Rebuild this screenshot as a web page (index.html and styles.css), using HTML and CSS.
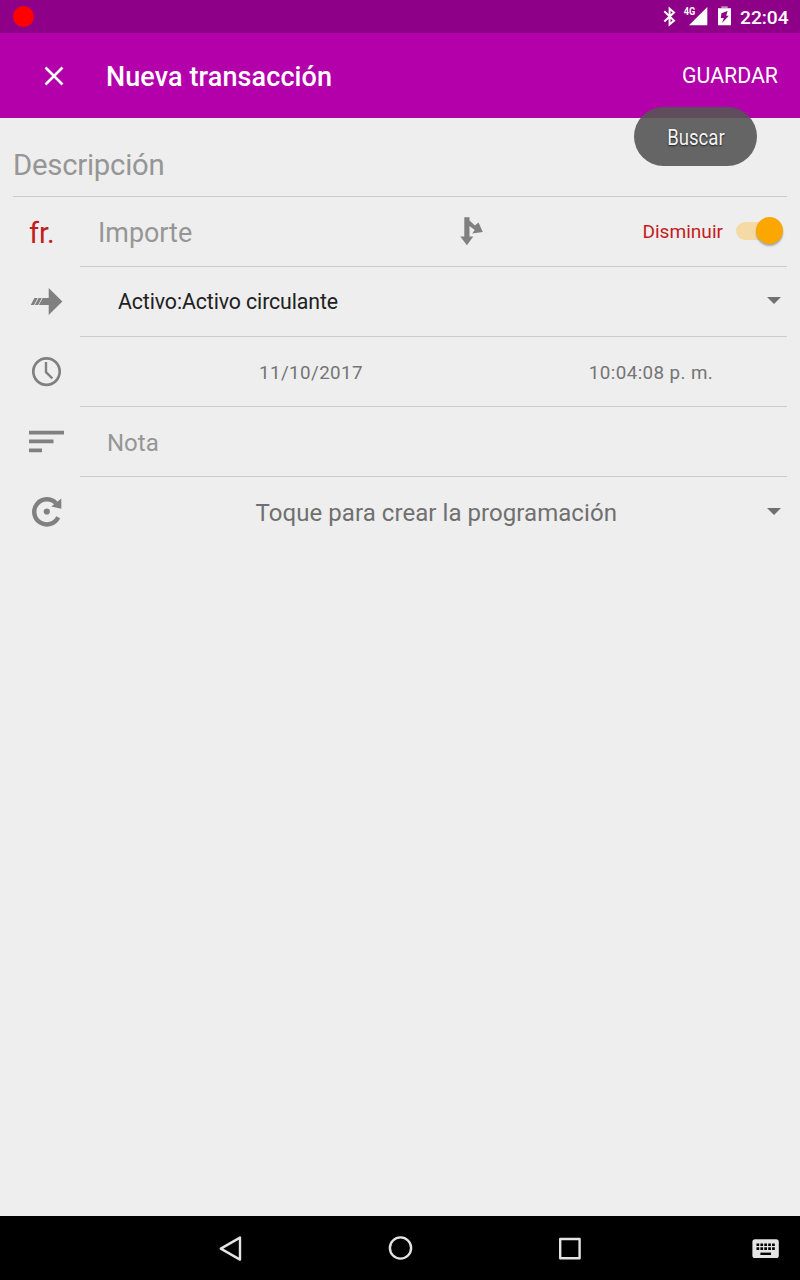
FILE: index.html
```html
<!DOCTYPE html>
<html lang="es">
<head>
<meta charset="utf-8">
<title>Nueva transacción</title>
<link rel="stylesheet" href="styles.css">
</head>
<body>
<div class="screen">
  <header class="status">
    <span class="record"></span>
    <svg class="status-icons" viewBox="660 0 76 33" width="76" height="33">
      <path d="M664.3 11.2L674 20.6L669.6 24.4V8.6L674 12.5L664.3 21.6" fill="none" stroke="#fff" stroke-width="2"/>
      <text x="683.8" y="15.2" class="net" textLength="11.5" lengthAdjust="spacingAndGlyphs">4G</text>
      <path d="M707.3 7V25.3H689z" fill="#fff"/>
      <path d="M721.3 6.3h6.4v2h-6.4z" fill="#c78ac5"/>
      <path d="M718 8.3h13v16.9h-13zM727.6 11l-6.2 2.2-0.6 4.8h3l-1.8 5 6.8-7.2h-2.6z" fill="#fff" fill-rule="evenodd"/>
    </svg>
    <span class="clock">22:04</span>
  </header>
  <div class="appbar">
    <svg class="close" viewBox="0 0 20 20" width="20" height="20"><path d="M1.5 1.5l17 17M18.5 1.5l-17 17" stroke="#fff" stroke-width="2.5"/></svg>
    <h1 class="title">Nueva transacción</h1>
    <span class="save">GUARDAR</span>
    <div class="toast"><span class="toast-text">Buscar</span></div>
  </div>
  <main class="form">
    <div class="description hint">Descripción</div>
    <div class="row">
      <div class="lead currency">fr.</div>
      <div class="field amount">
        <span class="hint importe">Importe</span>
        <svg class="split" viewBox="458 215 28 33" width="28" height="33"><path d="M464.3 217.2h5.2v3.2l5.4 5.2 3.6-3.1 4.3 9.6-10.6 1.4 2.5-3.6-5.2-4v10.6h3.8l-6.4 8.8-6.6-8.8h4z" fill="#808080"/></svg>
        <span class="decrease">Disminuir</span>
        <span class="switch"><span class="thumb"></span></span>
      </div>
    </div>
    <div class="row">
      <svg class="lead" viewBox="13 267 67 70" width="67" height="70"><path d="M34.4 298h3.3l-3.7 6.9h-3.3zM38.6 298h3.2l-3.7 6.9h-3.2zM42.7 298h6V288l13.7 13.4L48.7 315v-10.1h-9.8z" fill="#808080"/></svg>
      <div class="field"><span class="account">Activo:Activo circulante</span><span class="caret"></span></div>
    </div>
    <div class="row">
      <svg class="lead" viewBox="13 337 67 70" width="67" height="70"><circle cx="46.5" cy="371.6" r="13.2" fill="none" stroke="#808080" stroke-width="2.7"/><path d="M46 362v10.2l6.4 6.3" fill="none" stroke="#808080" stroke-width="2.4"/></svg>
      <div class="field when"><span class="date">11/10/2017</span><span class="time">10:04:08 p. m.</span></div>
    </div>
    <div class="row">
      <svg class="lead" viewBox="13 407 67 70" width="67" height="70"><path d="M29 430.7h35v3.7H29zM29 439.6h24.5v3.7H29zM29 448.6h13v3.7H29z" fill="#808080"/></svg>
      <div class="field"><span class="hint note">Nota</span></div>
    </div>
    <div class="row last">
      <svg class="lead" viewBox="13 477 67 70" width="67" height="70"><path d="M56 503.2A12.6 12.6 0 1 0 58.2 517.3" fill="none" stroke="#808080" stroke-width="4.4"/><path d="M61.3 498.5v10.2l-10-2.3z" fill="#808080"/><circle cx="46.8" cy="511.5" r="3.1" fill="#808080"/></svg>
      <div class="field"><span class="schedule">Toque para crear la programación</span><span class="caret"></span></div>
    </div>
  </main>
  <nav class="navbar">
    <svg viewBox="0 1216 800 64" width="800" height="64">
      <g fill="none" stroke="#e4e4e4" stroke-width="2.4" stroke-linejoin="round">
        <path d="M240 1237.6v22L220.8 1248.6z"/>
        <circle cx="400.5" cy="1248" r="10.6"/>
        <rect x="560.2" y="1239" width="19.4" height="19.2"/>
      </g>
      <rect x="752.4" y="1239.2" width="26.4" height="18.8" rx="2.6" fill="#e4e4e4"/>
      <path d="M756.5 1244.7h18.4M756.5 1248.6h18.4" stroke="#000" stroke-width="2.6" stroke-dasharray="2.7 1.2"/>
      <path d="M760.4 1253.8h10.6" stroke="#000" stroke-width="2.4"/>
    </svg>
  </nav>
</div>
</body>
</html>
```
FILE: styles.css
```css
* { box-sizing: border-box; }
body { margin: 0; font-family: Roboto, "Noto Sans", sans-serif; background: #eee; }
.screen { display: flex; flex-direction: column; width: 800px; height: 1280px; }
.status { display: flex; align-items: center; height: 33px; padding-left: 13px; background: #8e0087; color: #fff; }
.record { width: 21px; height: 21px; border-radius: 50%; background: #f00; }
.status-icons { margin-left: 626px; }
.net { font: 700 10.5px Roboto, sans-serif; fill: #fff; }
.clock { margin-left: 4px; font-size: 19.2px; font-weight: 500; line-height: 33px; padding-top: 1px; }
.appbar { position: relative; display: flex; align-items: center; height: 85px; padding: 0 22px 0 44px; background: #b400ab; color: #fff; }
.title { margin: 3px 0 0 42px; font-size: 27px; font-weight: 500; letter-spacing: .1px; line-height: 32px; }
.save { margin-left: auto; font-size: 21.3px; }
.toast { position: absolute; left: 634px; top: 74px; width: 123px; height: 59px; display: flex; align-items: center; justify-content: center; border-radius: 30px; background: rgba(85, 85, 85, .9); color: #f3f3f3; }
.toast-text { font-size: 21.3px; text-shadow: 0 1px 2px rgba(0, 0, 0, .75); transform: scaleX(.87); margin-top: 2px; }
.form { flex: 1; padding: 0 13px; }
.hint { color: #969696; }
.description { height: 79px; padding-top: 29px; font-size: 29.3px; letter-spacing: -.24px; line-height: 36px; border-bottom: 1px solid #ccc; }
.row { display: flex; height: 70px; }
.lead { flex: 0 0 67px; }
.currency { padding: 2px 0 0 16px; font-size: 29px; letter-spacing: -.1px; line-height: 69px; color: #c41c1c; }
.field { flex: 1; display: flex; align-items: center; border-bottom: 1px solid #ccc; }
.last .field { border-bottom: 0; }
.importe { width: 362px; padding: 2px 0 0 18px; font-size: 26.9px; }
.split { margin-left: 16px; }
.decrease { margin-left: auto; font-size: 19.1px; color: #c41c1c; }
.switch { position: relative; width: 44px; height: 18px; margin: -2px 7px 0 13px; border-radius: 9px; background: #f5daa5; }
.thumb { position: absolute; left: 20px; top: -5px; width: 27px; height: 27px; border-radius: 50%; background: #fca600; box-shadow: 0 2px 2px rgba(0, 0, 0, .3); }
.account { margin: 0 0 0 38px; font-size: 21.3px; letter-spacing: -.1px; color: #212121; }
.caret { margin: -2px 6.5px 0 auto; border: solid transparent; border-width: 7.5px 7px 0; border-top-color: #707070; }
.when { padding-top: 3px; font-size: 18.8px; letter-spacing: .4px; color: #757575; }
.date { width: 462px; text-align: center; }
.time { width: 218px; text-align: center; }
.note { margin: 2px 0 0 27px; font-size: 24px; }
.schedule { flex: 1; text-align: center; padding: 2px 0 0 26px; font-size: 24px; letter-spacing: .06px; color: #707070; }
.navbar { height: 64px; background: #000; }
.navbar svg { display: block; }
```
